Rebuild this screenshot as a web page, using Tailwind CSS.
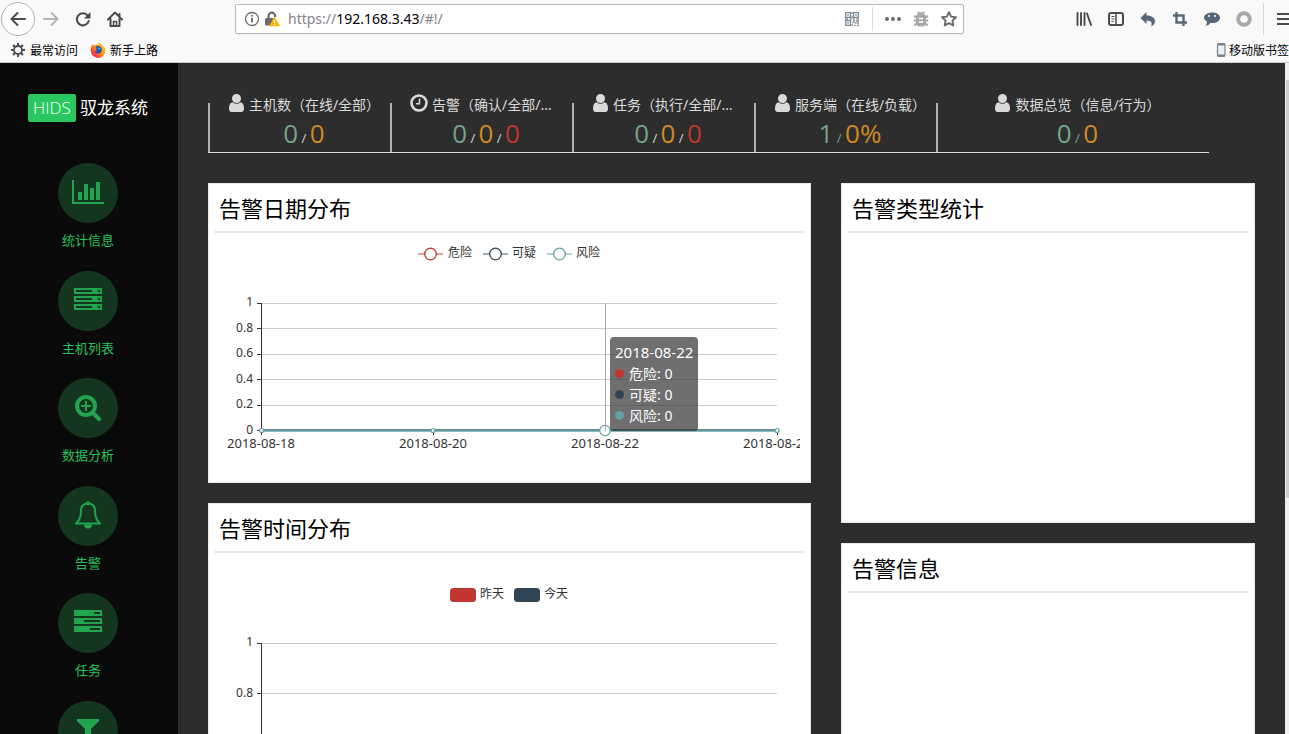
<!DOCTYPE html>
<html lang="zh-CN">
<head>
<meta charset="utf-8">
<title>HIDS 驭龙系统</title>
<script src="https://cdn.jsdelivr.net/npm/@tailwindcss/browser@4"></script>
</head>
<body class="flex h-screen flex-col overflow-hidden bg-[#2d2d2d] font-['Noto_Sans','Noto_Sans_CJK_SC',sans-serif]">

<svg class="hidden" aria-hidden="true">
  <symbol id="user" viewBox="256 128 1280 1536"><path fill="currentColor" d="M1536 1399q0 109-62.5 187t-150.5 78h-854q-88 0-150.5-78t-62.5-187q0-85 8.5-160.5t31.5-152 58.5-131 94-89 134.5-34.5q131 128 313 128t313-128q76 0 134.5 34.5t94 89 58.5 131 31.5 152 8.5 160.5zm-256-887q0 159-112.5 271.5t-271.5 112.5-271.5-112.5-112.5-271.5 112.5-271.5 271.5-112.5 271.5 112.5 112.5 271.5z"/></symbol>
</svg>

<!-- Browser toolbar -->
<header class="shrink-0 overflow-hidden border-b border-[#cccccc] bg-[#f9f9fa] text-[#4a4a4f]">
  <div class="flex h-[38px] items-center pl-px">
    <button aria-label="后退" class="flex size-[34px] shrink-0 items-center justify-center rounded-full border border-[#b1b1b3] bg-white">
      <svg class="size-4" viewBox="0 0 16 16" fill="none" stroke="currentColor" stroke-width="2" stroke-linecap="round" stroke-linejoin="round"><path d="M15 8H1.500M7.500 2 1.500 8l6 6"/></svg>
    </button>
    <button aria-label="前进" disabled class="flex size-8 shrink-0 items-center justify-center text-[#b4b4b6]">
      <svg class="size-4" viewBox="0 0 16 16" fill="none" stroke="currentColor" stroke-width="2" stroke-linecap="round" stroke-linejoin="round"><path d="M1 8h13.500M8.500 2l6 6-6 6"/></svg>
    </button>
    <button aria-label="刷新" class="flex size-8 shrink-0 items-center justify-center">
      <svg class="size-4" viewBox="0 0 16 16" fill="none" stroke="currentColor" stroke-width="2" stroke-linecap="round"><path d="M12.700 4.700A6 6 0 1 0 13.700 10"/><path d="M15.500 1v6.500H9z" fill="currentColor" stroke="none"/></svg>
    </button>
    <button aria-label="主页" class="flex size-8 shrink-0 items-center justify-center">
      <svg class="size-4" viewBox="0 0 16 16" fill="none" stroke="currentColor" stroke-width="2" stroke-linecap="round" stroke-linejoin="round"><path d="M1 8.500 8 1.500l7 7M3.500 8v7h9V8M12.500 3v2"/><path d="M6.500 15v-4.500h3V15" stroke-width="1.500"/></svg>
    </button>
    <div class="flex-[7]"></div>
    <div class="flex h-[30px] flex-[48] items-center rounded-xs border border-[#b9b9bb] bg-white pl-2 pr-1.5 shadow-xs">
      <svg class="size-4 text-[#6a6a6e]" viewBox="0 0 16 16" fill="none" stroke="currentColor"><circle cx="8" cy="8" r="6.500" stroke-width="1.300"/><path d="M8 7v4.500" stroke-width="1.800"/><circle cx="8" cy="4.700" r="1" fill="currentColor" stroke="none"/></svg>
      <svg class="ml-1 size-4" viewBox="0 0 16 16"><path d="M4.500 7V5a3.300 3.300 0 0 1 6.600 0v1" fill="none" stroke="#6a6a6e" stroke-width="2.200"/><path d="M1 8.500A1.500 1.500 0 0 1 2.500 7H9v7.500H2.500A1.500 1.500 0 0 1 1 13z" fill="#6a6a6e"/><path d="M10.500 5.500 5.500 14.200q-.4 1 .6 1H15q1 0 .6-1z" fill="#ffb000"/><path d="M10.500 9v3M10.500 13v1" stroke="#fff" stroke-width="1.300"/></svg>
      <div role="textbox" aria-label="地址栏" contenteditable="true" class="ml-2 flex-1 text-[14px] leading-5 text-[#838388]">https://<span class="text-black">192.168.3.43</span>/#!/</div>
      <button aria-label="二维码"><svg class="size-4 text-[#808a96]" viewBox="0 0 16 16" fill="none" stroke="currentColor" stroke-width="1.300"><path d="M1.600 1.600h4.800v4.800H1.600zM9.600 1.600h4.800v4.800H9.600zM1.600 9.600h4.800v4.800H1.600z"/><path d="M3.200 4h1.600M11.200 4h1.600M3.200 12h1.600" stroke-width="1.600"/><path d="M1 8h3M5.500 8h2M8 1v2M8 4.500v3M9 8h2M12.500 8H15M9 10h2M12 10h3M8 11.500h1.500M10.500 12h2M8 13v2M10 14.500h1.500M13 14.500h2M14 11v2"/></svg></button>
      <div class="mx-3 h-6 w-px bg-[#dcdcde]"></div>
      <button aria-label="页面操作"><svg class="size-4" viewBox="0 0 16 16" fill="#6a6a6e"><circle cx="2" cy="8" r="2"/><circle cx="8" cy="8" r="2"/><circle cx="14" cy="8" r="2"/></svg></button>
      <button aria-label="调试" class="ml-3"><svg class="size-4 text-[#a9a9ab]" viewBox="0 0 16 16" fill="none" stroke="currentColor" stroke-width="2.200"><rect x="3" y="2.500" width="10" height="13" rx="4" fill="currentColor" stroke="none"/><path d="M4.500 1q3.500 3 7 0M1 5l3 1.500M15 5l-3 1.500M.8 9.500H4M15.200 9.500H12M1.500 14.500 4 12M14.500 14.500 12 12"/><path d="M6 7.500h4M6 11h4" stroke="#fff" stroke-width="1.300"/></svg></button>
      <button aria-label="收藏" class="ml-3"><svg class="size-4 text-[#6a6a6e]" viewBox="0 0 16 16" fill="none" stroke="currentColor" stroke-width="1.900" stroke-linejoin="round"><path d="m8 1.200 2.100 4.400 4.800.6-3.500 3.400.9 4.900L8 12.100l-4.300 2.400.9-4.900L1.100 6.200l4.800-.6z"/></svg></button>
    </div>
    <div class="flex-[7]"></div>
    <button aria-label="书库" class="flex size-8 shrink-0 items-center justify-center"><svg class="size-4" viewBox="0 0 16 16" stroke="currentColor" stroke-width="1.900" stroke-linecap="round"><path d="M1.500 2v12M5 2v12M8.500 2v12M11 2.500l4 11.500"/></svg></button>
    <button aria-label="侧栏" class="flex size-8 shrink-0 items-center justify-center"><svg class="size-4" viewBox="0 0 16 16" fill="none" stroke="currentColor" stroke-width="2"><rect x="1" y="2" width="14" height="12" rx="2"/><path d="M8 2v12" stroke-width="1.500"/><path d="M3.500 5.500h3M3.500 8h3M3.500 10.500h2" stroke-width="1"/></svg></button>
    <button aria-label="撤销" class="flex size-8 shrink-0 items-center justify-center text-[#56677a]"><svg class="size-4" viewBox="0 0 16 16" fill="currentColor"><path d="M6.500 1v3.500C12 4.500 15 7 15 10.500c0 2-1.500 4-4 5 1.500-3 1-6-4.500-6V13L.5 7z"/></svg></button>
    <button aria-label="截图" class="flex size-8 shrink-0 items-center justify-center text-[#56677a]"><svg class="size-4" viewBox="0 0 16 16" fill="none" stroke="currentColor" stroke-width="2.400"><path d="M4.500 1v10.500H15M1 4.500h10.500V15"/></svg></button>
    <button aria-label="消息" class="flex size-8 shrink-0 items-center justify-center text-[#56677a]"><svg class="size-4" viewBox="0 0 16 16"><path fill="currentColor" d="M8.500 1.500c4.200 0 7.500 2.200 7.500 5.200s-3.300 5.300-7.500 5.300q-1 0-2-.2Q5 14.500 1.500 15 3 13 3 10.500 0 9 0 6.700c0-3 4-5.200 8.500-5.200z"/><circle cx="5" cy="5" r="1" fill="#fff"/><circle cx="11" cy="5" r="1" fill="#fff"/></svg></button>
    <button aria-label="扩展" class="flex size-8 shrink-0 items-center justify-center text-[#a9a9ab]"><svg class="size-4" viewBox="0 0 16 16" fill="none" stroke="currentColor" stroke-width="4"><circle cx="8" cy="8" r="5.800"/></svg></button>
    <div class="ml-[3px] h-8 w-px shrink-0 bg-[#d7d7db]"></div>
    <button aria-label="打开菜单" class="flex h-8 w-[25px] shrink-0 items-center justify-end"><svg class="h-4 w-3" viewBox="0 0 12 16" stroke="currentColor" stroke-width="2"><path d="M0 3h12M0 8h12M0 13h12"/></svg></button>
  </div>
  <nav class="flex h-6 items-center pl-2.5 font-['Noto_Sans_CJK_SC',sans-serif] text-xs text-black">
    <a href="#" class="flex items-center gap-1">
      <svg class="size-4 text-[#4a4a4f]" viewBox="0 0 16 16" fill="none" stroke="currentColor"><circle cx="8" cy="8" r="4" stroke-width="1.800"/><path stroke-width="2" d="M8 1v2.500M8 12.500V15M1 8h2.500M12.500 8H15M3 3l2 2M11 11l2 2M13 3l-2 2M5 11l-2 2"/></svg>
      最常访问</a>
    <a href="#" class="ml-3 flex items-center gap-1">
      <svg class="size-4" viewBox="0 0 16 16"><defs><linearGradient id="fx" x1="1" y1="0" x2="0" y2="1"><stop offset="0" stop-color="#ffe226"/><stop offset=".45" stop-color="#ff9a16"/><stop offset=".75" stop-color="#ff3a3a"/><stop offset="1" stop-color="#e31587"/></linearGradient></defs><path fill="url(#fx)" d="M2.500 2.200 4 3.500Q6 2 8.500 3L9 .5q2 .8 3.500 3 2.800 1.500 3 5A7.300 7.300 0 0 1 .7 8.600Q.5 5 2.500 2.200z"/><path fill="#1a4fb5" d="M5.500 5Q7.500 3.300 9.800 4.200q2.400 1.500 2 4.300a3.900 3.900 0 0 1-7.500.5q1.700 1 3.200-.2l-1.700-.7q-.2-1.300 1-1.500z"/><path fill="#35b3f5" d="M8 5.500q2-.2 2.500 1.500-1 1-2.300.3z"/></svg>
      新手上路</a>
    <a href="#" class="ml-auto flex shrink-0 items-center whitespace-nowrap">
      <svg class="size-4" viewBox="0 0 16 16"><rect x="4.500" y="1.500" width="7.500" height="13" rx="1.500" fill="#eef1f3" stroke="#76828d" stroke-width="1.200"/><path d="M4.500 2.500H12M4.500 13.500H12" stroke="#76828d" stroke-width="1.800"/></svg>
      移动版书签</a>
  </nav>
</header>

<div class="flex min-h-0 flex-1">
  <!-- Sidebar -->
  <aside class="w-[178px] shrink-0 overflow-hidden bg-[#0a0a0a] pr-0.5 pt-[31px]">
    <h1 class="flex items-center justify-center gap-1 text-[17px] leading-7 text-white">
      <span class="rounded-xs bg-[#29c75f] px-[5px] font-['Open_Sans',sans-serif] font-light">HIDS</span>驭龙系统
    </h1>
    <nav class="mt-[41px] flex flex-col gap-5 text-[13px] leading-normal text-[#28c35c]">
      <a href="#" class="flex flex-col items-center gap-2">
        <span class="flex size-[60px] items-center justify-center rounded-full bg-[#14361f] text-[#23a450]"><svg class="h-[26px] w-8" viewBox="0 0 32 26" fill="currentColor"><path d="M0 0h2v22h30v2H0zM6 12h4v8H6zM12 4h4v16h-4zM18 8h4v12h-4zM24 2h4v18h-4z"/></svg></span>
        统计信息</a>
      <a href="#" class="flex flex-col items-center gap-2">
        <span class="flex size-[60px] items-center justify-center rounded-full bg-[#14361f] text-[#23a450]"><svg class="h-[26px] w-7" viewBox="0 0 28 26" fill="currentColor" fill-rule="evenodd"><path d="M0 0h28v6H0zM2 2v2h16V2zM0 8h28v6H0zM2 10v2h16v-2zM0 16h28v6H0zM2 18v2h16v-2z"/><g fill="#14361f"><circle cx="25" cy="3" r="1.300"/><circle cx="25" cy="11" r="1.300"/><circle cx="25" cy="19" r="1.300"/></g></svg></span>
        主机列表</a>
      <a href="#" class="flex flex-col items-center gap-2">
        <span class="flex size-[60px] items-center justify-center rounded-full bg-[#14361f] text-[#23a450]"><svg class="size-[26px]" viewBox="0 0 26 26" fill="none" stroke="currentColor"><circle cx="11" cy="11" r="9" stroke-width="4"/><path d="m18 18 6 6" stroke-width="4" stroke-linecap="round"/><path d="M11 6v10M6 11h10" stroke-width="2"/></svg></span>
        数据分析</a>
      <a href="#" class="flex flex-col items-center gap-2">
        <span class="flex size-[60px] items-center justify-center rounded-full bg-[#14361f] text-[#23a450]"><svg class="h-[30px] w-[26px]" viewBox="0 0 26 30" fill="none" stroke="currentColor" stroke-width="2" stroke-linejoin="round"><path d="M13 2.500c-4.500 0-7 3-7 7.500 0 6-1.500 9.500-5 12.500h24c-3.500-3-5-6.500-5-12.500 0-4.500-2.500-7.500-7-7.500z"/><path d="M13 1.500v1.200" stroke-width="3" stroke-linecap="round"/><path d="M9 23.500a4 4 0 0 0 8 0z" fill="currentColor" stroke="none"/></svg></span>
        告警</a>
      <a href="#" class="flex flex-col items-center gap-2">
        <span class="flex size-[60px] items-center justify-center rounded-full bg-[#14361f] text-[#23a450]"><svg class="h-[26px] w-7" viewBox="0 0 28 26" fill="currentColor" fill-rule="evenodd"><path d="M0 0h28v6H0zM20 2v2h6V2zM0 8h28v6H0zM10 10v2h16v-2zM0 16h28v6H0zM16 18v2h10v-2z"/></svg></span>
        任务</a>
      <a href="#" aria-label="规则" class="flex flex-col items-center gap-2">
        <span class="flex size-[60px] items-center justify-center rounded-full bg-[#14361f] text-[#23a450]"><svg class="h-6 w-[22px]" viewBox="0 0 22 24" fill="currentColor"><path d="M0 0h22v2l-8 8v12l-6-5v-7L0 2z"/></svg></span>
      </a>
    </nav>
  </aside>

  <!-- Dashboard -->
  <main class="min-w-0 flex-1 overflow-hidden px-[30px] pt-[31px]">
    <section class="mr-[46px] grid grid-cols-[2fr_2fr_2fr_2fr_3fr] border-b border-[#d9dee4] text-sm leading-[21px] text-[#dadada]">
      <div class="relative min-w-0 pb-px pl-5 pr-2.5 text-center before:absolute before:bottom-0 before:left-0 before:top-[9px] before:w-0.5 before:bg-[#adb2b5]">
        <div class="flex h-[21px] items-center justify-center gap-1 whitespace-nowrap"><svg class="mb-1 h-[18px] w-[17px] shrink-0"><use href="#user"/></svg><span>主机数（在线/全部）</span></div>
        <div class="font-['Open_Sans',sans-serif] text-[26px] leading-9 text-[#76a488]">0<span class="text-[13px] leading-none text-[#dadada]"> / </span><span class="text-[#cf8a22]">0</span></div>
      </div>
      <div class="relative min-w-0 pb-px pl-5 pr-2.5 text-center before:absolute before:bottom-0 before:left-0 before:top-[9px] before:w-0.5 before:bg-[#adb2b5]">
        <div class="flex h-[21px] items-center gap-1 whitespace-nowrap"><svg class="mb-1 size-[18px] shrink-0" viewBox="0 0 18 18" fill="none" stroke="currentColor"><circle cx="9" cy="9" r="7.500" stroke-width="2.600"/><path d="M9.500 4.500v5.200H6" stroke-width="1.500"/></svg><span>告警（确认/全部/…</span></div>
        <div class="font-['Open_Sans',sans-serif] text-[26px] leading-9 text-[#76a488]">0<span class="text-[13px] leading-none text-[#dadada]"> / </span><span class="text-[#cf8a22]">0</span><span class="text-[13px] leading-none text-[#dadada]"> / </span><span class="text-[#c23531]">0</span></div>
      </div>
      <div class="relative min-w-0 pb-px pl-5 pr-2.5 text-center before:absolute before:bottom-0 before:left-0 before:top-[9px] before:w-0.5 before:bg-[#adb2b5]">
        <div class="flex h-[21px] items-center gap-1 whitespace-nowrap"><svg class="mb-1 h-[18px] w-[17px] shrink-0"><use href="#user"/></svg><span>任务（执行/全部/…</span></div>
        <div class="font-['Open_Sans',sans-serif] text-[26px] leading-9 text-[#76a488]">0<span class="text-[13px] leading-none text-[#dadada]"> / </span><span class="text-[#cf8a22]">0</span><span class="text-[13px] leading-none text-[#dadada]"> / </span><span class="text-[#c23531]">0</span></div>
      </div>
      <div class="relative min-w-0 pb-px pl-5 pr-2.5 text-center before:absolute before:bottom-0 before:left-0 before:top-[9px] before:w-0.5 before:bg-[#adb2b5]">
        <div class="flex h-[21px] items-center justify-center gap-1 whitespace-nowrap"><svg class="mb-1 h-[18px] w-[17px] shrink-0"><use href="#user"/></svg><span>服务端（在线/负载）</span></div>
        <div class="font-['Open_Sans',sans-serif] text-[26px] leading-9 text-[#76a488]">1<span class="text-[13px] leading-none"> / </span><span class="text-[#cf8a22]">0%</span></div>
      </div>
      <div class="relative min-w-0 pb-px pl-5 pr-2.5 text-center before:absolute before:bottom-0 before:left-0 before:top-[9px] before:w-0.5 before:bg-[#adb2b5]">
        <div class="flex h-[21px] items-center justify-center gap-1 whitespace-nowrap"><svg class="mb-1 h-[18px] w-[17px] shrink-0"><use href="#user"/></svg><span>数据总览（信息/行为）</span></div>
        <div class="font-['Open_Sans',sans-serif] text-[26px] leading-9 text-[#76a488]">0<span class="text-[13px] leading-none"> / </span><span class="text-[#cf8a22]">0</span></div>
      </div>
    </section>

    <div class="mt-[30px] grid grid-cols-[603fr_414fr] items-start gap-[30px]">
      <div class="flex min-w-0 flex-col gap-5">
        <section class="border border-[#e6e9ed] bg-white px-[5px]">
          <h2 class="h-[49px] border-b-2 border-[#e6e9ed] px-[5px] text-[22px] leading-[48px] text-black">告警日期分布</h2>
          <div class="relative mx-[5px]">
            <svg class="block h-auto w-full overflow-hidden" viewBox="0 0 581 249" role="img" aria-label="告警日期分布折线图">
              <g fill="#fff" stroke-width="1.300">
                <path d="M199 21h25" stroke="#c23531" stroke-opacity=".7"/><circle cx="211.500" cy="21" r="5.800" stroke="#c23531"/>
                <path d="M264 21h25" stroke="#2f4554" stroke-opacity=".7"/><circle cx="276.500" cy="21" r="5.800" stroke="#2f4554"/>
                <path d="M328 21h25" stroke="#61a0a8" stroke-opacity=".7"/><circle cx="340.500" cy="21" r="5.800" stroke="#61a0a8"/>
              </g>
              <g fill="#333" font-size="12"><text x="229" y="24">危险</text><text x="293" y="24">可疑</text><text x="357" y="24">风险</text></g>
              <path stroke="#ccc" d="M43 70.500h515M43 95.500h515M43 121.500h515M43 146.500h515M43 172.500h515M43 197.500h515"/>
              <path stroke="#333" fill="none" d="M42.500 70v132M38 70.500h5M38 95.500h5M38 121.500h5M38 146.500h5M38 172.500h5M38 197.500h520M214.500 197v5M386.500 197v5M558.500 197v5"/>
              <g fill="#333" font-size="12" text-anchor="end"><text x="34" y="73">1</text><text x="34" y="99">0.8</text><text x="34" y="124">0.6</text><text x="34" y="150">0.4</text><text x="34" y="175">0.2</text><text x="34" y="201">0</text></g>
              <g fill="#333" font-size="13" text-anchor="middle"><text x="42" y="215">2018-08-18</text><text x="214" y="215">2018-08-20</text><text x="386" y="215">2018-08-22</text><text x="558" y="215">2018-08-24</text></g>
              <path stroke="#61a0a8" stroke-width="2.500" d="M42 197.500h516"/><path stroke="#6f8289" d="M42 196.500h516"/>
              <g fill="#fff" stroke="#61a0a8" stroke-width="1.200"><circle cx="42.500" cy="197.500" r="2"/><circle cx="214" cy="197.500" r="2"/><circle cx="558" cy="197.500" r="2"/><circle cx="386" cy="197.500" r="5.200"/></g>
              <path stroke="#aaa" d="M386.500 70v128"/>
            </svg>
            <div class="absolute left-[67.300%] top-[41.700%] whitespace-nowrap rounded-sm bg-[#323232]/70 p-[5px] text-sm leading-[21px] text-white">
              <div class="text-[15px] leading-[21px]">2018-08-22</div>
              <div class="flex items-center gap-[5px]"><span class="size-[9px] rounded-full bg-[#c23531]"></span>危险: 0</div>
              <div class="flex items-center gap-[5px]"><span class="size-[9px] rounded-full bg-[#2f4554]"></span>可疑: 0</div>
              <div class="flex items-center gap-[5px]"><span class="size-[9px] rounded-full bg-[#61a0a8]"></span>风险: 0</div>
            </div>
          </div>
        </section>
        <section class="border border-[#e6e9ed] bg-white px-[5px]">
          <h2 class="h-[49px] border-b-2 border-[#e6e9ed] px-[5px] text-[22px] leading-[48px] text-black">告警时间分布</h2>
          <div class="mx-[5px]">
            <svg class="block h-auto w-full" viewBox="0 0 581 400" role="img" aria-label="告警时间分布柱状图">
              <rect x="231" y="35" width="26" height="14" rx="3.500" fill="#c23531"/><rect x="295" y="35" width="26" height="14" rx="3.500" fill="#2f4554"/>
              <g fill="#333" font-size="12"><text x="261" y="45">昨天</text><text x="325" y="45">今天</text></g>
              <path stroke="#ccc" d="M43 90.500h515M43 140.500h515M43 191.500h515M43 242.500h515M43 292.500h515"/>
              <path stroke="#333" fill="none" d="M42.500 90v259M38 90.500h5M38 140.500h5M38 191.500h5M38 242.500h5M38 292.500h5M38 343.500h520"/>
              <g fill="#333" font-size="12" text-anchor="end"><text x="34" y="93">1</text><text x="34" y="144">0.8</text></g>
            </svg>
          </div>
        </section>
      </div>
      <div class="flex min-w-0 flex-col gap-5">
        <section class="min-h-[340px] border border-[#e6e9ed] bg-white px-[5px]">
          <h2 class="h-[49px] border-b-2 border-[#e6e9ed] px-[5px] text-[22px] leading-[48px] text-black">告警类型统计</h2>
        </section>
        <section class="min-h-[340px] border border-[#e6e9ed] bg-white px-[5px]">
          <h2 class="h-[49px] border-b-2 border-[#e6e9ed] px-[5px] text-[22px] leading-[48px] text-black">告警信息</h2>
        </section>
      </div>
    </div>
  </main>

  <!-- Page scrollbar -->
  <div class="w-1 shrink-0 bg-[#f0f0f0] pl-px pt-[17px]"><div class="h-[418px] bg-[#cdcdcd]"></div></div>
</div>
</body>
</html>
